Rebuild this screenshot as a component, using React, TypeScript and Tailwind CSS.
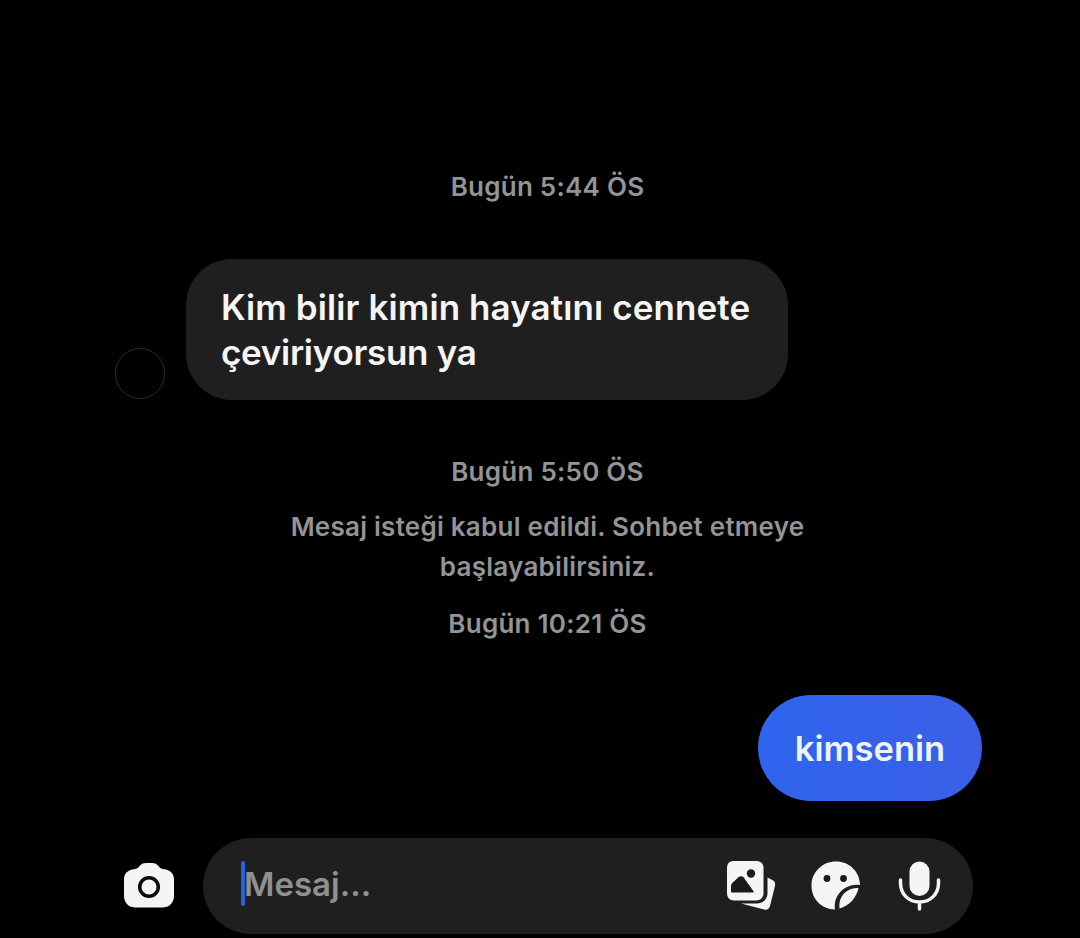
import React from 'react';

const Stamp = ({ children, className = '' }: { children: React.ReactNode; className?: string }) => (
  <div className={`text-center text-[26px] leading-[30px] tracking-[0.25px] font-semibold text-[#949494] ${className}`}>{children}</div>
);

const CameraIcon = () => (
  <svg width="52" height="48" viewBox="0 0 52 48" className="shrink-0">
    <path
      fill="#f5f5f5"
      fillRule="evenodd"
      d="M17 3.500C18.500 1.800 20.500 1 23 1h6c2.500 0 4.500.8 6 2.500l1.500 1.800c1 1.200 2.500 1.700 4.500 1.900 6 .5 10 4.300 10 10v16.300c0 7.500-4.500 12-12 12H13c-7.500 0-12-4.500-12-12V17.200c0-5.700 4-9.500 10-10 2-.2 3.500-.7 4.500-1.900z"
    />
    <circle cx="26" cy="25" r="9.300" fill="none" stroke="#0a0a0a" strokeWidth="3.500" />
  </svg>
);

const GalleryIcon = () => (
  <svg width="50" height="50" viewBox="0 0 50 50">
    <path
      fill="#f5f5f5"
      d="M7 0h22c4.500 0 7.500 2.500 7.500 7v25c0 4.500-3 7.500-7.500 7.500H7c-4.500 0-7-3-7-7.500V7c0-4.500 2.500-7 7-7z"
    />
    <path fill="#1a1a1a" d="M5 31.500c-.8 0-1-.5-1-1.300v-5c0-1.500.5-2.500 1.500-3.500l6-5.500c1.500-1.300 3.500-1.300 5 0l10 14c.5.8.2 1.300-.8 1.300z" />
    <circle cx="24" cy="12.500" r="4.200" fill="#1a1a1a" />
    <path
      fill="#f5f5f5"
      d="M14 42.500h16c6 0 10.500-4.500 10.500-10.500V16.500l4.800 2.500c2.500 1.300 3.300 3.300 2.700 5.800l-5 20.200c-.8 3-2.800 4.300-5.800 3.500z"
    />
  </svg>
);

const StickerIcon = () => (
  <svg width="50" height="50" viewBox="0 0 50 50">
    <path
      fill="#f5f5f5"
      d="M25 .5C38.500.5 49 11 49 24c-5-.8-10 .2-14.500 2.800C27 31.300 22.500 39.500 24 48.500 10.500 48 .5 38 .5 24.500.5 11 11.500.5 25 .5z"
    />
    <circle cx="16" cy="17.500" r="3.400" fill="#1a1a1a" />
    <circle cx="32.500" cy="17.500" r="3.400" fill="#1a1a1a" />
    <path fill="#f5f5f5" d="M28.500 47.500c-1-7.500 2-14 8-17.800 3.500-2.200 7-3 11-2.700-1.800 9.500-9.500 18-19 20.500z" />
  </svg>
);

const MicIcon = () => (
  <svg width="44" height="50" viewBox="0 0 44 50">
    <rect x="11.500" y="0.500" width="20" height="34.500" rx="10" fill="#f5f5f5" />
    <path
      fill="none"
      stroke="#f5f5f5"
      strokeWidth="3.500"
      strokeLinecap="round"
      d="M2.500 19v3c0 11 8 19 19 19s19-8 19-19v-3M21.500 41v7"
    />
  </svg>
);

const App: React.FC = () => {
  return (
    <div
      className="w-[1080px] h-[938px] overflow-hidden bg-black flex flex-col pt-[172px] pl-[115px] pr-[98px]"
      style={{ fontFamily: 'Inter, "Noto Sans", sans-serif' }}
    >
      <Stamp className="-ml-[2px]">Bugün 5:44 ÖS</Stamp>

      <div className="mt-[57px] flex items-end gap-[21px]">
        <div className="w-[50px] h-[51px] rounded-full border border-[#2c2c2c] mb-[1px] shrink-0" />
        <div className="w-[602px] h-[141px] rounded-[46px] bg-[#1f1f1f] pl-[35px] pt-[26px] text-[35px] leading-[45px] tracking-[0.1px] font-semibold text-[#f5f5f5]">
          Kim bilir kimin hayatını cennete
          <br />
          <span className="tracking-[-0.3px]">çeviriyorsun ya</span>
        </div>
      </div>

      <Stamp className="mt-[57px] -ml-[2px]">Bugün 5:50 ÖS</Stamp>
      <div className="mt-[20px] -ml-[2px] text-center text-[26px] leading-[40px] tracking-[0.25px] font-semibold text-[#949494]">
        Mesaj isteği kabul edildi. Sohbet etmeye
        <br />
        başlayabilirsiniz.
      </div>
      <Stamp className="mt-[22px] -ml-[2px]">Bugün 10:21 ÖS</Stamp>

      <div className="mt-[56px] flex justify-end">
        <div className="w-[224px] h-[106px] rounded-[53px] bg-linear-to-r from-[#2f64ee] to-[#3a5fe6] flex items-center justify-center pt-[2px] text-[34.5px] font-semibold text-[#eef3ff]">
          kimsenin
        </div>
      </div>

      <div className="mt-[37px] ml-[8px] flex items-center gap-[28px]">
        <CameraIcon />
        <div className="w-[770px] h-[96px] shrink-0 rounded-[48px] bg-[#1f1f1f] flex items-center pl-[38px] pr-[31px]">
          <div className="w-[4px] h-[45px] mb-[5px] bg-[#2563d8] rounded-sm shrink-0" />
          <span className="-ml-[1px] mb-[3px] flex-1 text-[33px] font-semibold text-[#909090]">Mesaj...</span>
          <div className="flex items-center">
            <GalleryIcon />
            <div className="ml-[34px]"><StickerIcon /></div>
            <div className="ml-[37px]"><MicIcon /></div>
          </div>
        </div>
      </div>
    </div>
  );
};

export default App;
